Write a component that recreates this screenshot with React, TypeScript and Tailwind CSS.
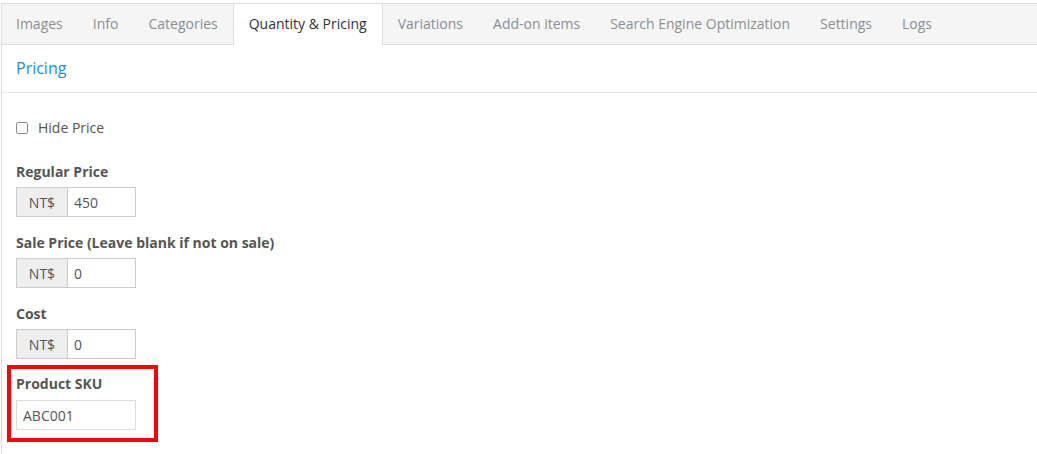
const tabs = [
  "Images",
  "Info",
  "Categories",
  "Quantity & Pricing",
  "Variations",
  "Add-on items",
  "Search Engine Optimization",
  "Settings",
  "Logs",
];

function PriceField({ label, value }: { label: string; value: string }) {
  return (
    <div className="mb-[16px]">
      <div className="mb-[5px] text-[14px] leading-[20px] font-bold text-[#555]">{label}</div>
      <div className="flex h-[30px] w-[120px] text-[14px] text-[#555]">
        <span className="flex w-[52px] items-center justify-center border border-[#ccc] bg-[#eee]">NT$</span>
        <input
          readOnly
          value={value}
          className="w-[68px] border border-l-0 border-[#ccc] px-[6px] outline-none"
        />
      </div>
    </div>
  );
}

export default function App() {
  const active = "Quantity & Pricing";
  return (
    <div className="min-h-[454px] bg-white pt-[3px] pl-px font-['Open_Sans',sans-serif]">
      <div className="min-h-[451px] border-l border-[#ddd]">
        <nav className="flex border-t border-b border-[#ddd] bg-[#f5f5f5]">
          {tabs.map((t, i) => (
            <div
              key={t}
              className={
                (i === 0 ? "pl-[14px] pr-[15px] " : "px-[15px] ") +
                (t === active
                  ? "-mb-px border-x border-[#ddd] bg-white py-[10px] text-[14px] leading-[20px] text-[#333]"
                  : "py-[10px] text-[14px] leading-[20px] text-[#8a8e96]")
              }
            >
              {t}
            </div>
          ))}
        </nav>

        <div className="border-b border-[#e5e5e5] px-[14px] pt-[12px] pb-[13px] text-[16px] leading-[22px] text-[#1f8ae0]">
          Pricing
        </div>

        <div className="px-[14px] pt-[25px]">
          <label className="flex items-center gap-[10px] text-[14px] leading-[20px] text-[#555]">
            <span className="h-[12px] w-[12px] rounded-[2px] border border-[#8f8f8f] bg-white" />
            Hide Price
          </label>

          <div className="mt-[24px]">
            <PriceField label="Regular Price" value="450" />
            <PriceField label="Sale Price (Leave blank if not on sale)" value="0" />
            <div className="-mb-[16px]">
              <PriceField label="Cost" value="0" />
            </div>
          </div>

          {/* highlighted SKU field */}
          <div className="mt-[22px] -ml-[9px] w-[151px] border-4 border-[#f00] pt-[5px] pb-[8px] pl-[5px]">
            <div className="mb-[6px] text-[14px] leading-[20px] font-bold text-[#555]">Product SKU</div>
            <input
              readOnly
              value="ABC001"
              className="block h-[30px] w-[120px] border border-[#ddd] px-[6px] text-[14px] text-[#555] outline-none"
            />
          </div>
        </div>
      </div>
    </div>
  );
}
